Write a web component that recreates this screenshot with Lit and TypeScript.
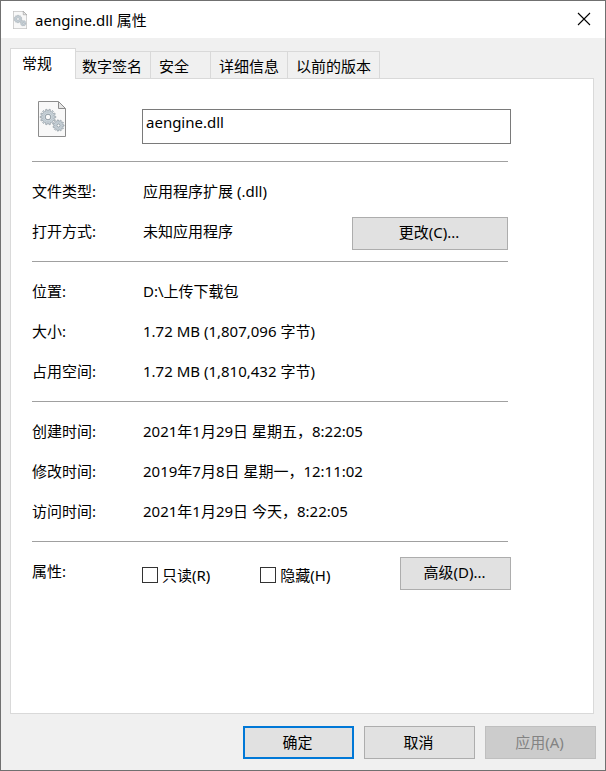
import { LitElement, html, css, svg } from "lit";
import { customElement, property, state } from "lit/decorators.js";
import { classMap } from "lit/directives/class-map.js";

const FONT = css`"Noto Sans", "Noto Sans CJK SC", sans-serif`;

/** Outline of a toothed wheel, centred on (cx, cy). */
function gear(cx: number, cy: number, outer: number, inner: number, teeth: number): string {
  const pts: string[] = [];
  const step = (Math.PI * 2) / teeth;
  for (let i = 0; i < teeth; i++) {
    const a = i * step;
    for (const [r, d] of [[inner, -0.3], [outer, -0.2], [outer, 0.2], [inner, 0.3]]) {
      const x = cx + r * Math.cos(a + d * step);
      const y = cy + r * Math.sin(a + d * step);
      pts.push(`${x.toFixed(2)},${y.toFixed(2)}`);
    }
  }
  return pts.join(" ");
}

@customElement("dll-icon")
export class DllIcon extends LitElement {
  @property({ type: Boolean, reflect: true }) small = false;

  static styles = css`
    :host { display: block; width: 28px; height: 36px; }
    :host([small]) { width: 14px; height: 18px; }
    svg { display: block; width: 100%; height: 100%; }
  `;

  private wheel(cx: number, cy: number, outer: number, inner: number, teeth: number, ring: number, hole: number) {
    return svg`
      <polygon points=${gear(cx, cy, outer, inner, teeth)} fill="#c6d0d7" stroke="#98a2aa" stroke-width="0.8"></polygon>
      <circle cx=${cx} cy=${cy} r=${ring} fill="#d3dce2" stroke="#b4bec5" stroke-width="0.6"></circle>
      <circle cx=${cx} cy=${cy} r=${hole} fill="#fafafa" stroke="#8f9ba3" stroke-width="1"></circle>`;
  }

  render() {
    return html`<svg viewBox="0 0 28 36" aria-hidden="true">
      <path d="M0.5 0.5H20L27.5 8V35.5H0.5Z" fill="#f8f8f8" stroke="#8c8c8c"></path>
      <path d="M20.5 0.5V7.5H27.5Z" fill="#e6e6e6" stroke="#8c8c8c"></path>
      ${this.wheel(10, 16, 7.8, 6.2, 14, 4.4, 2.8)}
      ${this.wheel(20.5, 24.5, 5.6, 4.4, 11, 3, 1.6)}
    </svg>`;
  }
}

@customElement("app-root")
export class AppRoot extends LitElement {
  @state() private tab = 0;

  private tabs = ["常规", "数字签名", "安全", "详细信息", "以前的版本"];

  static styles = css`
    :host {
      display: flex;
      flex-direction: column;
      box-sizing: border-box;
      min-height: 100vh;
      border: 1px solid #707070;
      background: #f0f0f0;
      color: #000;
      font: 15px/20px ${FONT};
    }
    * { box-sizing: border-box; }
    button, input { font: inherit; color: inherit; margin: 0; }
    button { white-space: nowrap; }

    .titlebar {
      display: flex;
      align-items: center;
      height: 37px;
      padding-left: 12px;
      background: #fff;
    }
    .title { flex: 1; margin: 0; padding-left: 8px; font-size: 15px; font-weight: 400; }
    .close {
      display: flex;
      align-items: center;
      justify-content: center;
      width: 42px;
      height: 37px;
      padding: 0 0 2px;
      border: 0;
      background: none;
    }

    .tabs {
      display: flex;
      align-items: flex-end;
      height: 40px;
      margin: 0 11px 0 9px;
    }
    .tab {
      height: 27px;
      min-width: 60px;
      padding: 2px 8px 0;
      border: 1px solid #d9d9d9;
      border-width: 1px 1px 0 0;
      background: #f0f0f0;
      text-align: left;
    }
    .tab.selected {
      position: relative;
      z-index: 1;
      height: 31px;
      min-width: 66px;
      margin: 0 -2px -1px 0;
      padding: 0 11px 2px;
      border-left-width: 1px;
      background: #fff;
    }

    .panel {
      flex: 1;
      margin: 0 11px 0 9px;
      padding: 22px 82px 22px 21px;
      border: 1px solid #d9d9d9;
      background: #fff;
    }
    .row {
      display: grid;
      grid-template-columns: 110px minmax(0, 1fr) auto;
      align-items: center;
      min-height: 40px;
    }
    .group {
      margin: 0 3px 0 0;
      padding: 9px 0 10px;
      border-top: 1px solid #a0a0a0;
    }
    .label, .value, .action { margin: 0; }
    .value { padding-left: 1px; }
    .action { display: flex; padding-top: 4px; }

    .head { align-items: start; min-height: 60px; }
    .head dll-icon { margin-left: 6px; }
    .name {
      grid-column: 2 / 4;
      width: 100%;
      height: 35px;
      margin-top: 8px;
      padding: 0 3px 10px;
      border: 1px solid #7a7a7a;
      border-radius: 0;
      background: #fff;
      outline: none;
    }

    .btn {
      width: 111px;
      height: 33px;
      padding: 0 2px 2px 0;
      border: 1px solid #adadad;
      border-radius: 0;
      background: #e1e1e1;
    }
    .btn.wide { width: 156px; }
    .btn.default { border: 2px solid #0078d7; }
    .btn:disabled { border-color: #bfbfbf; background: #ccc; color: #838383; }

    .attributes {
      margin-right: 3px;
      padding-top: 9px;
      border-top: 1px solid #a0a0a0;
    }
    .attributes .row { margin-right: -3px; }
    .checks { display: flex; gap: 50px; padding-top: 8px; }
    .check { display: flex; align-items: center; gap: 4px; white-space: nowrap; }
    .check input {
      appearance: none;
      width: 16px;
      height: 16px;
      border: 1px solid #333;
      background: #fff;
    }
    .check input:checked { background: #333; }

    .footer {
      display: flex;
      justify-content: flex-end;
      gap: 10px;
      padding: 12px 9px 11px;
    }
  `;

  private field(label: string, value: string, action: unknown = null) {
    return html`<div class="row">
      <dt class="label">${label}</dt>
      <dd class="value">${value}</dd>
      ${action ? html`<dd class="action">${action}</dd>` : null}
    </div>`;
  }

  render() {
    return html`
      <header class="titlebar">
        <dll-icon small></dll-icon>
        <h1 class="title">aengine.dll 属性</h1>
        <button class="close" aria-label="关闭">
          <svg width="14" height="14" viewBox="0 0 14 14" aria-hidden="true">
            <path d="M1 1L13 13M13 1L1 13" stroke="#000" stroke-width="1.1"></path>
          </svg>
        </button>
      </header>

      <div class="tabs" role="tablist">
        ${this.tabs.map((name, i) => html`<button
          role="tab"
          aria-selected=${i === this.tab ? "true" : "false"}
          class=${classMap({ tab: true, selected: i === this.tab })}
          @click=${() => (this.tab = i)}
        >${name}</button>`)}
      </div>

      <main class="panel" role="tabpanel">
        <div class="row head">
          <dll-icon></dll-icon>
          <input class="name" type="text" aria-label="文件名" .value=${"aengine.dll"} />
        </div>

        <dl class="group">
          ${this.field("文件类型:", "应用程序扩展 (.dll)")}
          ${this.field("打开方式:", "未知应用程序", html`<button class="btn wide">更改(C)...</button>`)}
        </dl>
        <dl class="group">
          ${this.field("位置:", "D:\\上传下载包")}
          ${this.field("大小:", "1.72 MB (1,807,096 字节)")}
          ${this.field("占用空间:", "1.72 MB (1,810,432 字节)")}
        </dl>
        <dl class="group">
          ${this.field("创建时间:", "2021年1月29日 星期五，8:22:05")}
          ${this.field("修改时间:", "2019年7月8日 星期一，12:11:02")}
          ${this.field("访问时间:", "2021年1月29日 今天，8:22:05")}
        </dl>
        <div class="attributes">
          <div class="row" role="group" aria-labelledby="attr">
            <span class="label" id="attr">属性:</span>
            <div class="checks">
              <label class="check"><input type="checkbox" />只读(R)</label>
              <label class="check"><input type="checkbox" />隐藏(H)</label>
            </div>
            <div class="action"><button class="btn">高级(D)...</button></div>
          </div>
        </div>
      </main>

      <footer class="footer">
        <button class="btn default">确定</button>
        <button class="btn">取消</button>
        <button class="btn" disabled>应用(A)</button>
      </footer>
    `;
  }
}
